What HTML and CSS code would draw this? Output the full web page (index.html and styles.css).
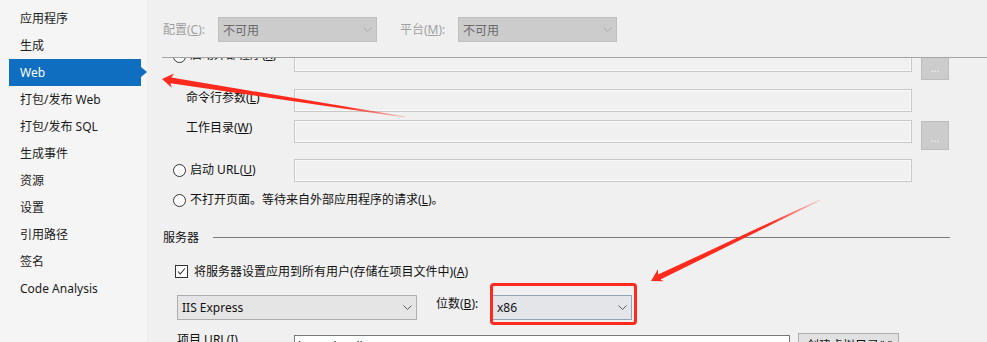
FILE: index.html
```html
<!DOCTYPE html>
<html lang="zh-CN">
<head>
    <meta charset="UTF-8">
    <meta name="viewport" content="width=device-width, initial-scale=1.0">
    <title>项目属性 - Web</title>
    <link rel="stylesheet" href="styles.css">
</head>
<body>
<div class="page">
    <ul class="nav">
        <li>应用程序</li>
        <li>生成</li>
        <li class="active">Web</li>
        <li>打包/发布 Web</li>
        <li>打包/发布 SQL</li>
        <li>生成事件</li>
        <li>资源</li>
        <li>设置</li>
        <li>引用路径</li>
        <li>签名</li>
        <li>Code Analysis</li>
    </ul>

    <div class="main">
        <div class="toolbar">
            <span class="tb-label">配置(<u>C</u>):</span>
            <div class="combo disabled">
                <span>不可用</span>
                <svg class="chev" viewBox="0 0 9 5"><polyline points="0.5,0.5 4.5,4.5 8.5,0.5"/></svg>
            </div>
            <span class="tb-label second">平台(<u>M</u>):</span>
            <div class="combo disabled">
                <span>不可用</span>
                <svg class="chev" viewBox="0 0 9 5"><polyline points="0.5,0.5 4.5,4.5 8.5,0.5"/></svg>
            </div>
        </div>

        <div class="scroller">
            <div class="scroll-content">
                <!-- start action -->
                <div class="row row1">
                    <div class="lbl"><span class="radio"></span>启动外部程序(<u>X</u>)</div>
                    <div class="field"></div>
                    <div class="browse">...</div>
                </div>
                <div class="row row2">
                    <div class="lbl sub">命令行参数(<u>L</u>)</div>
                    <div class="field"></div>
                </div>
                <div class="row row3">
                    <div class="lbl sub">工作目录(<u>W</u>)</div>
                    <div class="field"></div>
                    <div class="browse">...</div>
                </div>
                <div class="row row4">
                    <div class="lbl"><span class="radio"></span>启动 URL(<u>U</u>)</div>
                    <div class="field"></div>
                </div>
                <div class="row row5">
                    <div class="lbl wide"><span class="radio"></span>不打开页面。等待来自外部应用程序的请求(<u>L</u>)。</div>
                </div>

                <!-- servers -->
                <div class="section-head">
                    <span>服务器</span>
                    <span class="sep"></span>
                </div>
                <div class="check-row">
                    <span class="checkbox">
                        <svg viewBox="0 0 13 13"><polyline points="2.5,6.5 5,9.5 10.5,3"/></svg>
                    </span>
                    将服务器设置应用到所有用户(存储在项目文件中)(<u>A</u>)
                </div>
                <div class="server-row">
                    <div class="combo server">
                        <span>IIS Express</span>
                        <svg class="chev" viewBox="0 0 9 5"><polyline points="0.5,0.5 4.5,4.5 8.5,0.5"/></svg>
                    </div>
                    <span class="bits-label">位数(<u>B</u>):</span>
                    <div class="combo bits">
                        <span>x86</span>
                        <svg class="chev" viewBox="0 0 9 5"><polyline points="0.5,0.5 4.5,4.5 8.5,0.5"/></svg>
                    </div>
                </div>
                <div class="url-row">
                    <span class="url-label">项目 URL(<u>I</u>)</span>
                    <div class="url-input">http://localhost:52446/</div>
                    <div class="vdir">创建虚拟目录(<u>V</u>)</div>
                </div>
            </div>
        </div>
    </div>

    <svg class="annot" viewBox="0 0 987 342">
        <defs>
            <linearGradient id="fade1" gradientUnits="userSpaceOnUse" x1="162" y1="79" x2="405" y2="117">
                <stop offset="0" stop-color="#ff2a1e"/>
                <stop offset="0.75" stop-color="#ff2a1e"/>
                <stop offset="1" stop-color="#ff2a1e" stop-opacity="0.2"/>
            </linearGradient>
            <linearGradient id="fade2" gradientUnits="userSpaceOnUse" x1="651" y1="281" x2="820" y2="200">
                <stop offset="0" stop-color="#ff2a1e"/>
                <stop offset="0.7" stop-color="#ff2a1e"/>
                <stop offset="1" stop-color="#ff2a1e" stop-opacity="0.15"/>
            </linearGradient>
        </defs>
        <polygon fill="url(#fade1)" points="162,79 174,73.6 171.3,77.6 405.1,116.4 404.9,117.6 170.4,83.2 171.8,87.8"/>
        <polygon fill="url(#fade2)" points="651,281 658,269.2 658,274.6 819.7,199.5 820.3,200.5 660.4,279.6 663.8,281.3"/>
    </svg>
</div>
</body>
</html>
```

FILE: styles.css
```css
body {
    margin: 0;
    background-color: #f0f0f0;
    font-family: "Noto Sans", "Noto Sans CJK SC", sans-serif;
    font-size: 12px;
    color: #111;
}

u {
    text-underline-offset: 1px;
}

.page {
    position: relative;
    display: flex;
    width: 987px;
    height: 342px;
    overflow: hidden;
}

/* left navigation */
.nav {
    list-style: none;
    margin: 0;
    padding: 5px 0 0 9px;
    width: 138px;
    flex: none;
    background-color: #f5f5f5;
}

.nav li {
    position: relative;
    width: 132px;
    height: 27px;
    line-height: 27px;
    padding-left: 11px;
    box-sizing: border-box;
    color: #1b1b1b;
}

.nav li.active {
    background-color: #0f6ebf;
    color: #fff;
}

.nav li.active::after {
    content: "";
    position: absolute;
    right: -6px;
    top: 8px;
    border-left: 6px solid #0f6ebf;
    border-top: 5px solid transparent;
    border-bottom: 5px solid transparent;
}

/* main panel */
.main {
    flex: 1;
    padding-left: 15px;
    display: flex;
    flex-direction: column;
}

.toolbar {
    height: 58px;
    border-bottom: 1px solid #a3a3a3;
    display: flex;
    align-items: flex-start;
    padding-top: 17px;
    box-sizing: border-box;
}

.tb-label {
    width: 55px;
    padding-left: 1px;
    line-height: 25px;
    color: #a0a0a0;
}

.tb-label.second {
    width: 58px;
    margin-left: 22px;
}

.combo {
    display: flex;
    align-items: center;
    justify-content: space-between;
    box-sizing: border-box;
    height: 25px;
    padding: 0 4px 0 4px;
    border: 1px solid #adadad;
    background-color: #e5e5e5;
}

.combo.disabled {
    width: 159px;
    background-color: #cccccc;
    border-color: #bfbfbf;
    color: #6a6a6a;
}

.chev {
    width: 9px;
    height: 5px;
    fill: none;
    stroke: #5a5a5a;
    stroke-width: 1;
}

.combo.disabled .chev {
    stroke: #a9a9a9;
}

.scroller {
    flex: 1;
    overflow: hidden;
}

.scroll-content {
    margin-top: -9px;
}

.row {
    display: flex;
    align-items: flex-start;
}

.row1 { height: 40px; }
.row2 { height: 31px; }
.row3 { height: 39px; }
.row4 { height: 31px; }
.row5 { height: 20px; }

.lbl {
    width: 132px;
    flex: none;
    display: flex;
    align-items: center;
    height: 18px;
    line-height: 18px;
    white-space: nowrap;
}

.lbl.sub {
    padding-left: 24px;
    box-sizing: border-box;
}

.row1 .lbl {
    margin-top: -3px;
}

.row1 .radio {
    margin-top: 3px;
}

.row3 .lbl {
    height: 16px;
}

.row4 .lbl {
    padding-top: 2px;
}

.row5 .lbl {
    height: 20px;
}

.lbl.wide {
    width: auto;
}

.radio {
    width: 13px;
    height: 13px;
    box-sizing: border-box;
    border: 1px solid #333;
    border-radius: 50%;
    background-color: #fff;
    margin: 0 4px 0 11px;
    flex: none;
}

.field {
    width: 618px;
    height: 23px;
    box-sizing: border-box;
    border: 1px solid #c8c8c8;
    box-shadow: inset 0 0 0 1px #fafafa;
    flex: none;
}

.browse {
    width: 28px;
    height: 29px;
    margin-left: 9px;
    box-sizing: border-box;
    border: 1px solid #bdbdbd;
    background-color: #cccccc;
    color: #f2f2f2;
    font-size: 11px;
    text-align: center;
    line-height: 32px;
    flex: none;
}

.row1 .browse { margin-top: 2px; }
.row3 .browse { margin-top: 1px; }

.section-head {
    margin-top: 17px;
    width: 788px;
    height: 20px;
    display: flex;
    align-items: center;
    padding-left: 1px;
    box-sizing: border-box;
}

.sep {
    flex: 1;
    margin-left: 14px;
    border-top: 1px solid #7d7d7d;
}

.check-row {
    margin-top: 14px;
    height: 20px;
    display: flex;
    align-items: center;
    padding-left: 13px;
}

.checkbox {
    width: 13px;
    height: 13px;
    box-sizing: border-box;
    border: 1px solid #333;
    background-color: #fff;
    margin-right: 6px;
    display: flex;
}

.checkbox svg {
    width: 11px;
    height: 11px;
    fill: none;
    stroke: #222;
    stroke-width: 1.2;
}

.server-row {
    margin-top: 14px;
    display: flex;
    align-items: flex-start;
    padding-left: 15px;
}

.combo.server {
    width: 240px;
    padding-left: 4px;
}

.bits-label {
    margin-left: 19px;
    width: 56px;
    line-height: 18px;
}

.combo.bits {
    position: relative;
    width: 140px;
    background-color: #e4e5e9;
    border-color: #8ea4b7;
}

/* red highlight around the bitness box */
.combo.bits::after {
    content: "";
    position: absolute;
    top: -13px;
    left: -3px;
    right: -6px;
    bottom: -6px;
    border: 3px solid #ff2a1e;
    border-radius: 4px;
}

.url-row {
    margin-top: 13px;
    display: flex;
    align-items: flex-start;
    padding-left: 15px;
}

.url-label {
    width: 117px;
    line-height: 14px;
    flex: none;
}

.url-input {
    margin-top: 2px;
    width: 496px;
    height: 23px;
    box-sizing: border-box;
    border: 1px solid #7a7a7a;
    background-color: #fff;
    padding: 2px 3px;
    line-height: 18px;
}

.vdir {
    margin-left: 8px;
    width: 101px;
    height: 24px;
    box-sizing: border-box;
    border: 1px solid #adadad;
    background-color: #e1e1e1;
    padding: 3px 0 0 8px;
    line-height: 18px;
}

.annot {
    position: absolute;
    top: 0;
    left: 0;
    width: 987px;
    height: 342px;
    pointer-events: none;
}
```
